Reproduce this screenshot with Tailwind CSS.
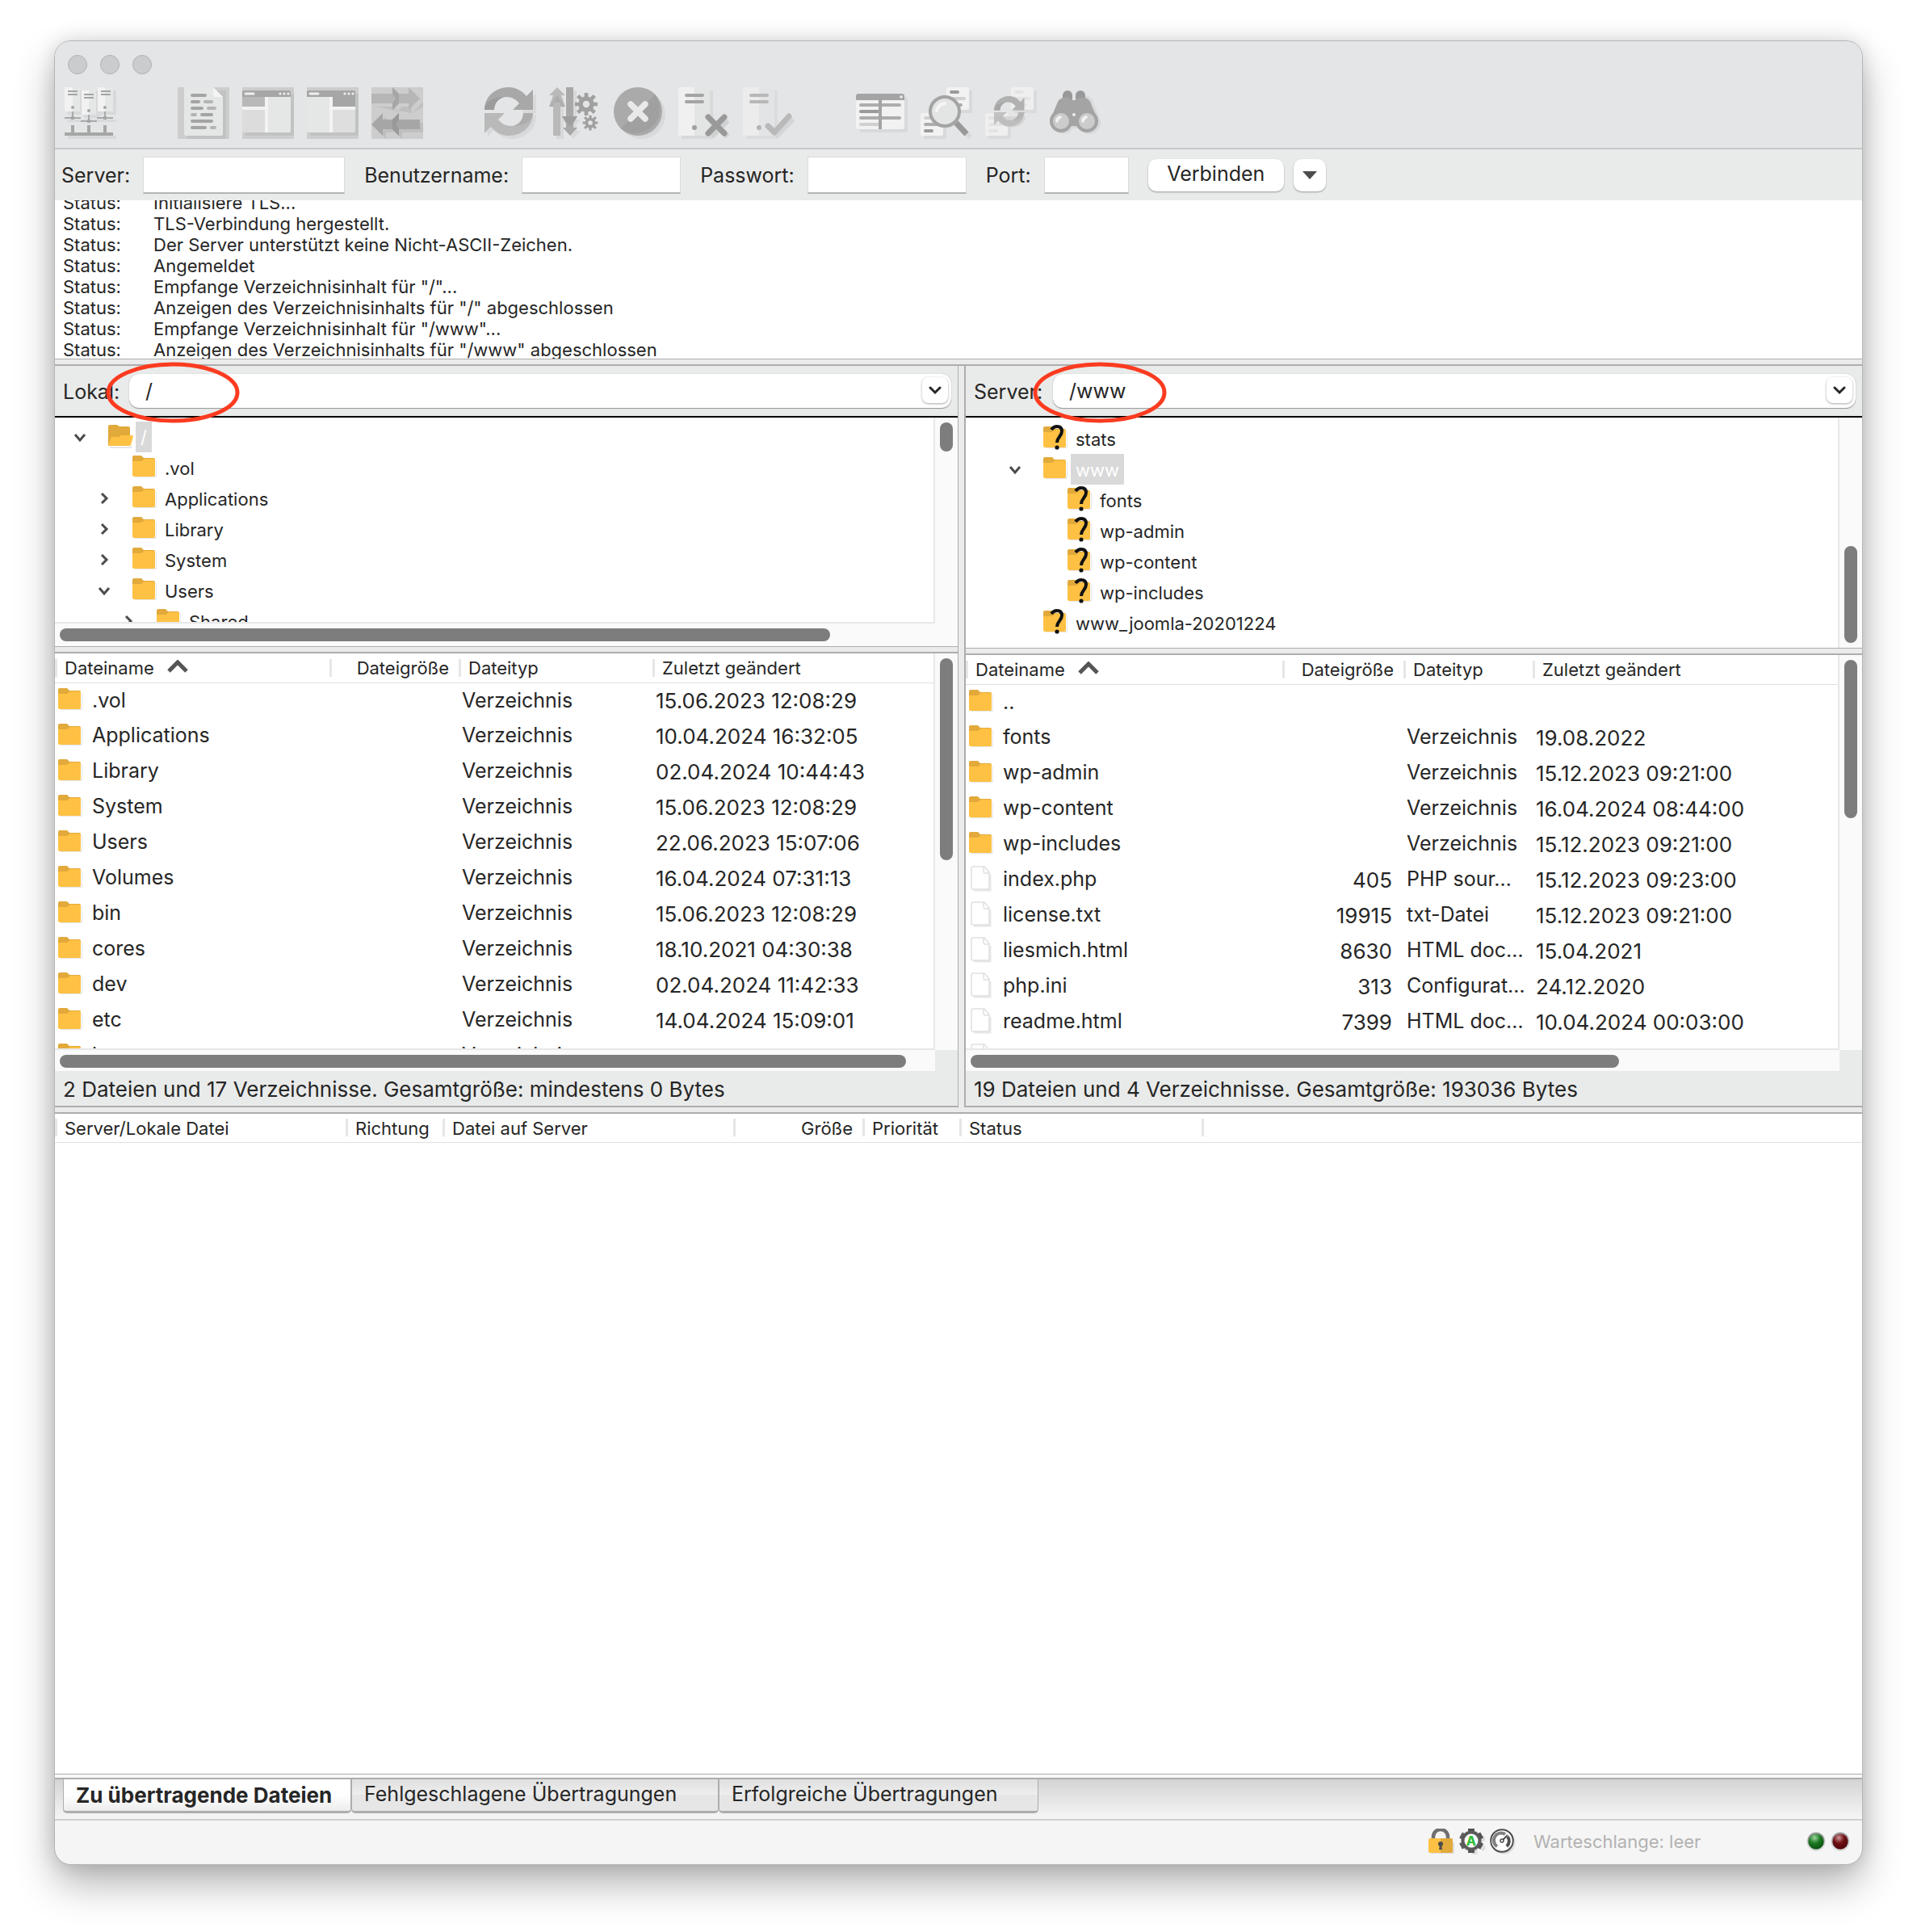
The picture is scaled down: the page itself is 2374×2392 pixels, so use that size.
<!DOCTYPE html>
<html lang="de">
<head>
    <meta charset="UTF-8">
    <meta name="viewport" content="width=device-width, initial-scale=1">
    <title>FileZilla</title>
    <script src="https://cdn.jsdelivr.net/npm/@tailwindcss/browser@4"></script>
</head>
<body class="bg-white font-['Inter','Liberation_Sans',sans-serif] text-[25px] text-[#262626]">

    <!-- Shared icons -->
    <svg class="hidden" aria-hidden="true">
        <symbol id="folder" viewBox="0 0 32 32">
            <path d="M3 29h25a2 2 0 0 0 2-2V8h-1v19H3z" fill="#e6e6e6"/>
            <path d="M0 4a2 2 0 0 1 2-2h9l3 3h12a2 2 0 0 1 2 2v4H0z" fill="#e2a93b"/>
            <path d="M0 9h11l4-3h11a2 2 0 0 1 2 2v18a2 2 0 0 1-2 2H2a2 2 0 0 1-2-2z" fill="#ffc143"/>
        </symbol>
        <symbol id="folder-open" viewBox="0 0 32 32">
            <path d="M2 29h25l3-3-1 5H2z" fill="#e6e6e6"/>
            <path d="M0 4a2 2 0 0 1 2-2h9l3 2h11a2 2 0 0 1 2 2v22H0z" fill="#e2a93b"/>
            <path d="M4 17h9l3-2h14a1 1 0 0 1 1 1l-3 11a2 2 0 0 1-2 1H1a1 1 0 0 1-1-1z" fill="#ffc143"/>
        </symbol>
        <symbol id="folder-unknown" viewBox="0 0 32 32">
            <use href="#folder"/>
            <path d="M10 6c2-3 5-4 7-4 4 0 6 2 6 6 0 6-6 7-6 14" fill="none" stroke="#111" stroke-width="4"/>
            <circle cx="17" cy="28" r="2.6" fill="#111"/>
        </symbol>
        <symbol id="file" viewBox="0 0 32 32">
            <path d="M6 30h20v-19" fill="none" stroke="#e8e8e8" stroke-width="3"/>
            <path d="M5 1h14l6 7v19a2 2 0 0 1-2 2H5a2 2 0 0 1-2-2V3a2 2 0 0 1 2-2z" fill="#fff" stroke="#e0e0e0" stroke-width="1.5"/>
            <path d="M18 1v6l1 2h6" fill="none" stroke="#e0e0e0" stroke-width="1.5"/>
        </symbol>
        <symbol id="chevron-down" viewBox="0 0 16 16"><path d="M2 5l6 7 6-7" fill="none" stroke="#4c4c4c" stroke-width="3"/></symbol>
        <symbol id="chevron-right" viewBox="0 0 16 16"><path d="M5 2l6 6-6 6" fill="none" stroke="#4c4c4c" stroke-width="3"/></symbol>
        <symbol id="sort-up" viewBox="0 0 26 16"><path d="M2 14L13 3l11 11" fill="none" stroke="#555" stroke-width="5"/></symbol>
        <symbol id="arrows-round" viewBox="0 0 64 64">
            <path d="M0 28C0 12 13 0 30 0c9 0 16 4 22 11l8-8v25H35l8-8c-4-5-9-8-16-8-8 0-15 7-15 16z" fill="#a8a8a8"/>
            <path d="M0 28C0 22 6 12 24 12c-7 2-12 8-12 16z" fill="#9c9c9c"/>
            <path d="M60 32c0 16-13 28-30 28-9 0-16-4-22-11l-8 8V32h25l-8 8c4 5 9 8 16 8 8 0 15-7 15-16z" fill="#b9b9b9"/>
            <path d="M60 32c0 6-6 16-24 16 7-2 12-8 12-16z" fill="#adadad"/>
        </symbol>
        <symbol id="gear" viewBox="-16 -16 32 32">
            <circle r="7.5" fill="none" stroke="#a0a0a0" stroke-width="6"/>
            <g stroke="#a0a0a0" stroke-width="5">
                <path d="M0-15v6M0 9v6M-15 0h6M9 0h6M-11-11l4 4M7 7l4 4M-11 11l4-4M7-7l4-4"/>
            </g>
        </symbol>
        <symbol id="server-box" viewBox="0 0 64 64">
            <path d="M4 4h39v60H4z" fill="#d8d9da"/>
            <rect width="39" height="60" rx="2" fill="#e3e4e4"/>
            <path d="M2 0h18v60H2a2 2 0 0 1-2-2V2a2 2 0 0 1 2-2z" fill="#f0f0f0"/>
            <path d="M10 10h20M10 18h20" stroke="#a4a4a4" stroke-width="4" stroke-linecap="round"/>
            <circle cx="20" cy="50" r="3" fill="#a0a0a0"/>
        </symbol>
    </svg>

    <div class="flex h-screen flex-col px-[68px] pt-[51px] pb-[84px]">
    <main class="flex min-h-0 flex-1 flex-col overflow-hidden rounded-[20px] bg-[#f5f5f5] shadow-[0_0_0_1px_#b5b5b5,0_24px_50px_rgba(0,0,0,0.3),0_0_24px_rgba(0,0,0,0.14)]">

        <!-- Title bar and toolbar -->
        <header class="h-[134px] shrink-0 border-b-2 border-[#c6c7c8] bg-[#e4e5e6] pt-[17px]">
            <div class="flex gap-4 px-4">
                <button aria-label="Schließen" class="size-6 rounded-full border border-[#b0b1b2] bg-[#cbcccd]"></button>
                <button aria-label="Minimieren" class="size-6 rounded-full border border-[#b0b1b2] bg-[#cbcccd]"></button>
                <button aria-label="Zoomen" class="size-6 rounded-full border border-[#b0b1b2] bg-[#cbcccd]"></button>
            </div>
            <nav class="mt-4 flex gap-[76px] px-3">
                <button aria-label="Servermanager">
                    <svg class="size-16" viewBox="0 0 64 64">
                        <path d="M4 4h60v30H44v4H24v-4H4zM4 40h60v3H4zM4 60h60v4H4z" fill="#d8d9da"/>
                        <path d="M0 0h19v30H0zM41 0h19v30H41zM21 4h18v30H21z" fill="#e5e6e6"/>
                        <path d="M0 0h10v30H2l-2-2zM41 0h9v30h-9zM21 4h9v30h-9z" fill="#f2f2f2"/>
                        <path d="M4 5h12M4 9h12M24 9h12M24 13h12M45 5h12M45 9h12" stroke="#a4a4a4" stroke-width="2"/>
                        <path d="M10 30v8M30 34v8M50 30v8M0 38h20M20 42h20M40 38h20" stroke="#aaa" stroke-width="2"/>
                        <path d="M10 47v12M30 47v12M50 47v12M0 58h60" fill="none" stroke="#a6a6a6" stroke-width="4"/>
                        <g fill="#a6a6a6"><circle cx="10" cy="25" r="2"/><circle cx="30" cy="29" r="2"/><circle cx="50" cy="25" r="2"/><path d="M8 36h4v4H8zM28 40h4v4h-4zM48 36h4v4h-4z"/></g>
                    </svg>
                </button>
                <div class="flex gap-4">
                    <button aria-label="Nachrichtenprotokoll">
                        <svg class="size-16" viewBox="0 0 64 64">
                            <rect width="64" height="64" rx="1" fill="#cdcdcd"/>
                            <path d="M12 64V4h48v60z" fill="#c1c2c2"/>
                            <path d="M8 0h36l12 12v46a2 2 0 0 1-2 2H10a2 2 0 0 1-2-2z" fill="#e5e6e6"/>
                            <path d="M44 0l12 12H46a2 2 0 0 1-2-2z" fill="#f4f4f4"/>
                            <path d="M18 10h16M18 18h8M18 26h12M30 34h12M18 42h24M18 50h16" stroke="#a4a4a4" stroke-width="4" stroke-linecap="round"/>
                            <path d="M34 18h8M38 26h8M18 34h4M42 50h4" stroke="#b4b4b4" stroke-width="4" stroke-linecap="round"/>
                        </svg>
                    </button>
                    <button aria-label="Lokaler Verzeichnisbaum">
                        <svg class="size-16" viewBox="0 0 64 64">
                            <rect width="64" height="64" rx="1" fill="#cdcdcd"/>
                            <path d="M4 8h60v52H4z" fill="#c1c2c2"/>
                            <path d="M0 12h60v42a2 2 0 0 1-2 2H2a2 2 0 0 1-2-2z" fill="#e5e6e6"/>
                            <path d="M0 28h28v28H0z" fill="#dcdcdc"/>
                            <path d="M0 12V6a2 2 0 0 1 2-2h56a2 2 0 0 1 2 2v6z" fill="#a6a6a6"/>
                            <path d="M0 12h28v12H0z" fill="#b8b8b8"/>
                            <path d="M28 12h4v44h-4V28H0v-4h28z" fill="#f3f3f3"/>
                            <path d="M4 8h10" stroke="#eee" stroke-width="3" stroke-linecap="round"/>
                            <g fill="#eee"><circle cx="47" cy="8" r="1.6"/><circle cx="52" cy="8" r="1.6"/><circle cx="57" cy="8" r="1.6"/></g>
                        </svg>
                    </button>
                    <button aria-label="Server-Verzeichnisbaum">
                        <svg class="size-16" viewBox="0 0 64 64">
                            <rect width="64" height="64" rx="1" fill="#cdcdcd"/>
                            <path d="M4 8h60v52H4z" fill="#c1c2c2"/>
                            <path d="M0 12h60v42a2 2 0 0 1-2 2H2a2 2 0 0 1-2-2z" fill="#dedede"/>
                            <path d="M0 12h28v44H2l-2-2z" fill="#e5e6e6"/>
                            <path d="M0 12V6a2 2 0 0 1 2-2h56a2 2 0 0 1 2 2v18H32V12z" fill="#a6a6a6"/>
                            <path d="M28 12h4v12h28v4H32v28h-4z" fill="#f3f3f3"/>
                            <path d="M4 8h10" stroke="#eee" stroke-width="3" stroke-linecap="round"/>
                            <g fill="#eee"><circle cx="47" cy="8" r="1.6"/><circle cx="52" cy="8" r="1.6"/><circle cx="57" cy="8" r="1.6"/></g>
                        </svg>
                    </button>
                    <button aria-label="Transfer-Warteschlange">
                        <svg class="size-16" viewBox="0 0 64 64">
                            <rect width="64" height="64" rx="1" fill="#cdcdcd"/>
                            <path d="M4 24h26v8l8-8h12v8l14-14v6L50 32zM4 50l14-14v8h8l8-8v8h30v12H38v8l-8-8H18v8z" fill="#bfbfbf"/>
                            <path d="M0 8h26V0l8 8h12V0l14 14-14 14v-8H34l-8 8v-8H0z" fill="#b6b6b6"/>
                            <path d="M26 0l8 8v12l-8 8v-8l4-6-4-6z" fill="#a6a6a6"/>
                            <path d="M60 40H34v-8l-8 8H14v-8L0 46l14 14v-8h12l8 8v-8h26z" fill="#a6a6a6"/>
                            <path d="M34 32l-8 8v12l8 8v-8l-4-6 4-6z" fill="#999"/>
                        </svg>
                    </button>
                </div>
                <div class="flex gap-4">
                    <button aria-label="Aktualisieren">
                        <svg class="size-16" viewBox="0 0 64 64">
                            <path d="M64 8v24H48V20zM64 34c0 18-13 30-30 30-9 0-16-4-22-11l-8 8V54l12-14z" fill="#d8d9da"/>
                            <path d="M17 40l8-8h23c0 9-7 16-15 16-7 0-12-3-16-8z" fill="#e4e5e6"/>
                            <use href="#arrows-round"/>
                        </svg>
                    </button>
                    <button aria-label="Warteschlange verarbeiten">
                        <svg class="size-16" viewBox="0 0 64 64">
                            <path d="M9 14h9v50H9zM25 4h9v36h5l-5 6v8h5l-9 10-9-10h4z" fill="#d8d9da"/>
                            <path d="M10 0l10 10h-5l5 14h-6v36H5V24H0l5-14H0z" fill="#b9b9b9"/>
                            <path d="M10 10l10 14h-6v-5H5v5H0z" fill="#adadad"/>
                            <path d="M21 0h9v36h5l-5 9v5h5l-9 10-9-10h4v-5l-5-9h5z" fill="#a8a8a8"/>
                            <path d="M16 36h19l-9 12z" fill="#9e9e9e"/>
                            <use href="#gear" x="31" y="6" width="30" height="30"/>
                            <use href="#gear" x="41" y="34" width="20" height="20"/>
                        </svg>
                    </button>
                    <button aria-label="Abbrechen">
                        <svg class="size-16" viewBox="0 0 64 64">
                            <circle cx="34" cy="34" r="30" fill="#d8d9da"/>
                            <circle cx="30" cy="30" r="30" fill="#aaa"/>
                            <path d="M51 9A30 30 0 0 1 9 51z" fill="#a0a0a0"/>
                            <path d="M21 21l18 18M39 21L21 39" stroke="#e9e9e9" stroke-width="7.5" stroke-linecap="round"/>
                        </svg>
                    </button>
                    <button aria-label="Trennen">
                        <svg class="size-16" viewBox="0 0 64 64">
                            <use href="#server-box"/>
                            <path d="M41 41l20 20M61 41L41 61" stroke="#d0d1d2" stroke-width="7"/>
                            <path d="M37 37l20 20M57 37L37 57" stroke="#999" stroke-width="7" stroke-linecap="round"/>
                        </svg>
                    </button>
                    <button aria-label="Wiederverbinden">
                        <svg class="size-16" viewBox="0 0 64 64">
                            <use href="#server-box" opacity="0.7"/>
                            <path d="M35 51l8 8 19-20" fill="none" stroke="#d4d5d6" stroke-width="7"/>
                            <path d="M31 48l8 8 18-20" fill="none" stroke="#b9b9b9" stroke-width="7" stroke-linecap="round" stroke-linejoin="round"/>
                        </svg>
                    </button>
                </div>
                <div class="flex gap-4">
                    <button aria-label="Filter">
                        <svg class="size-16" viewBox="0 0 64 64">
                            <rect x="4" y="12" width="60" height="44" rx="3" fill="#d8d9da"/>
                            <rect y="8" width="60" height="44" rx="3" fill="#f2f2f2"/>
                            <path d="M0 16v-5a3 3 0 0 1 3-3h54a3 3 0 0 1 3 3v5z" fill="#a4a4a4"/>
                            <path d="M6 22h48M6 38h48" stroke="#adadad" stroke-width="4" stroke-linecap="round"/>
                            <path d="M6 30h22" stroke="#9a9a9a" stroke-width="4" stroke-linecap="round"/>
                            <path d="M6 46h22" stroke="#d0d0d0" stroke-width="4" stroke-linecap="round"/>
                            <path d="M30 16v36" stroke="#a4a4a4" stroke-width="4"/>
                            <circle cx="56" cy="12" r="1.8" fill="#eee"/>
                        </svg>
                    </button>
                    <button aria-label="Verzeichnisvergleich">
                        <svg class="size-16" viewBox="0 0 64 64">
                            <path d="M36 4h28v28H36zM4 36h28v28H4zM44 48l4-4 16 16-4 4z" fill="#d8d9da"/>
                            <rect x="32" width="28" height="28" rx="2" fill="#f2f2f2"/>
                            <rect y="32" width="28" height="28" rx="2" fill="#f2f2f2"/>
                            <path d="M38 6h8M6 54h8" stroke="#9a9a9a" stroke-width="4" stroke-linecap="round"/>
                            <path d="M38 14h16M6 38h16" stroke="#d0d0d0" stroke-width="4" stroke-linecap="round"/>
                            <path d="M38 22h12M6 46h14" stroke="#adadad" stroke-width="4" stroke-linecap="round"/>
                            <path d="M44 44l13 14" stroke="#999" stroke-width="7"/>
                            <circle cx="30" cy="30" r="18" fill="#e3e5e4" stroke="#a4a4a4" stroke-width="4"/>
                            <path d="M20 29c1-5 4-8 10-9" fill="none" stroke="#f5f5f5" stroke-width="4" stroke-linecap="round"/>
                        </svg>
                    </button>
                    <button aria-label="Synchronisiertes Browsen">
                        <svg class="size-16" viewBox="0 0 64 64">
                            <path d="M36 4h28v28H36zM4 36h28v28H4z" fill="#dadbdc"/>
                            <rect x="32" width="28" height="28" rx="2" fill="#efefef"/>
                            <rect y="32" width="28" height="28" rx="2" fill="#efefef"/>
                            <path d="M38 6h8M38 14h16M38 22h12M6 38h16M6 46h14M6 54h8" stroke="#e2e4e3" stroke-width="4" stroke-linecap="round"/>
                            <path d="M18 36h32c0 14-22 20-32 4z" fill="#d6d6d6"/>
                            <g opacity="0.85"><use href="#arrows-round" x="11" y="11" width="40" height="40"/></g>
                        </svg>
                    </button>
                    <button aria-label="Suchen">
                        <svg class="size-16" viewBox="0 0 64 64">
                            <path d="M46 10l6 4 11 28a14 14 0 0 1-26 9h-8a14 14 0 0 1-24 0z" fill="#d8d9da"/>
                            <path d="M16 16V10a6 6 0 0 1 12 0v6zM32 16V10a6 6 0 0 1 12 0v6z" fill="#999"/>
                            <path d="M0 42L10 18c3-6 13-7 18-2h4c5-5 15-4 18 2l10 24-16 8-12-2h-4l-12 2z" fill="#a4a4a4"/>
                            <circle cx="14" cy="42" r="12" fill="#ccc" stroke="#a4a4a4" stroke-width="4"/>
                            <circle cx="46" cy="42" r="12" fill="#ccc" stroke="#a4a4a4" stroke-width="4"/>
                            <path d="M9 42c0-3 1-4 4-5M41 42c0-3 1-4 4-5" fill="none" stroke="#f2f2f2" stroke-width="3.5" stroke-linecap="round"/>
                            <circle cx="30" cy="34" r="2" fill="#eee"/>
                        </svg>
                    </button>
                </div>
            </nav>
        </header>

        <!-- Quick connect -->
        <form class="flex h-[63px] shrink-0 items-center bg-[#e9ebea] pl-2 [&_label]:pt-[2px]">
            <label for="host">Server:</label>
            <input id="host" type="text" class="ml-4 mr-6 h-[46px] w-[250px] border border-b-2 border-[#dadbda] border-b-[#b4b5b4] bg-white px-2 outline-none">
            <label for="user">Benutzername:</label>
            <input id="user" type="text" class="ml-4 mr-6 h-[46px] w-[197px] border border-b-2 border-[#dadbda] border-b-[#b4b5b4] bg-white px-2 outline-none">
            <label for="pass">Passwort:</label>
            <input id="pass" type="password" class="ml-4 mr-6 h-[46px] w-[197px] border border-b-2 border-[#dadbda] border-b-[#b4b5b4] bg-white px-2 outline-none">
            <label for="port">Port:</label>
            <input id="port" type="text" class="ml-4 mr-6 h-[46px] w-[105px] border border-b-2 border-[#dadbda] border-b-[#b4b5b4] bg-white px-2 outline-none">
            <button type="submit" class="mr-3 h-10 w-[168px] rounded-[10px] bg-white pb-[2px] shadow-[0_1px_2px_rgba(0,0,0,0.35)]">Verbinden</button>
            <button type="button" aria-label="Verlauf" class="flex h-10 w-10 items-center justify-center rounded-[10px] bg-white shadow-[0_1px_2px_rgba(0,0,0,0.35)]">
                <svg class="h-[10px] w-[18px]" viewBox="0 0 18 10"><path d="M0 0h18l-9 10z" fill="#4c4c4c"/></svg>
            </button>
        </form>

        <!-- Message log, scrolled to its end -->
        <section class="flex h-[197px] shrink-0 flex-col justify-end overflow-hidden border-b border-[#adadad] bg-white pl-[10px] text-[22px] leading-[26px]">
            <div class="-mb-[2px]">
                <p class="flex"><span class="w-28">Status:</span>Initialisiere TLS...</p>
                <p class="flex"><span class="w-28">Status:</span>TLS-Verbindung hergestellt.</p>
                <p class="flex"><span class="w-28">Status:</span>Der Server unterstützt keine Nicht-ASCII-Zeichen.</p>
                <p class="flex"><span class="w-28">Status:</span>Angemeldet</p>
                <p class="flex"><span class="w-28">Status:</span>Empfange Verzeichnisinhalt für "/"...</p>
                <p class="flex"><span class="w-28">Status:</span>Anzeigen des Verzeichnisinhalts für "/" abgeschlossen</p>
                <p class="flex"><span class="w-28">Status:</span>Empfange Verzeichnisinhalt für "/www"...</p>
                <p class="flex"><span class="w-28">Status:</span>Anzeigen des Verzeichnisinhalts für "/www" abgeschlossen</p>
            </div>
        </section>
        <div class="h-2 shrink-0 border-b-2 border-[#adadad] bg-[#ebebeb]"></div>

        <div class="flex shrink-0">
            <!-- Local side -->
            <section class="flex w-1/2 min-w-0 flex-col border-r border-[#adadad]">
                <div class="relative flex h-16 items-center border-b-2 border-black bg-[#e9ebea] pr-2 pl-[10px]">
                    <label for="local-path" class="w-[82px] pt-1">Lokal:</label>
                    <div class="relative flex-1">
                        <select id="local-path" class="block h-[42px] w-full appearance-none rounded-[12px] bg-white px-5 pt-[2px] shadow-[0_1px_1px_rgba(0,0,0,0.35),0_0_1px_rgba(0,0,0,0.3)] outline-none">
                            <option>/</option>
                        </select>
                        <span class="pointer-events-none absolute top-1 right-1 flex size-8 items-center justify-center rounded-[8px] bg-white shadow-[0_1px_3px_rgba(0,0,0,0.35)]">
                            <svg class="h-4 w-4" viewBox="0 0 16 16"><path d="M2 5l6 6 6-6" fill="none" stroke="#262626" stroke-width="3" stroke-linecap="round"/></svg>
                        </span>
                    </div>
                    <svg class="absolute -top-[5px] left-[63px] z-10 h-[76px] w-[166px]" viewBox="0 0 166 76"><ellipse cx="83" cy="38" rx="80" ry="35" fill="none" stroke="#fb3b20" stroke-width="5"/></svg>
                </div>
                <div class="flex h-[283px] bg-white text-[22px]">
                    <div class="flex min-w-0 flex-1 flex-col">
                        <ul class="min-h-0 flex-1 overflow-hidden border-r-2 border-b-2 border-[#e8e8e8] pt-[5px]">
                            <li class="flex h-[38px] items-center pl-[23px]"><svg class="mr-[27px] size-4"><use href="#chevron-down"/></svg><svg class="mb-[2px] size-8"><use href="#folder-open"/></svg><span class="ml-[2px] flex h-full items-center bg-[#d9d9d9] px-[6px] text-white">/</span></li>
                            <li class="flex h-[38px] items-center pl-[96px]"><svg class="mb-[2px] size-8"><use href="#folder"/></svg><span class="pl-2 pt-[2px]">.vol</span></li>
                            <li class="flex h-[38px] items-center pl-[53px]"><svg class="mr-[27px] size-4"><use href="#chevron-right"/></svg><svg class="mb-[2px] size-8"><use href="#folder"/></svg><span class="pl-2 pt-[2px]">Applications</span></li>
                            <li class="flex h-[38px] items-center pl-[53px]"><svg class="mr-[27px] size-4"><use href="#chevron-right"/></svg><svg class="mb-[2px] size-8"><use href="#folder"/></svg><span class="pl-2 pt-[2px]">Library</span></li>
                            <li class="flex h-[38px] items-center pl-[53px]"><svg class="mr-[27px] size-4"><use href="#chevron-right"/></svg><svg class="mb-[2px] size-8"><use href="#folder"/></svg><span class="pl-2 pt-[2px]">System</span></li>
                            <li class="flex h-[38px] items-center pl-[53px]"><svg class="mr-[27px] size-4"><use href="#chevron-down"/></svg><svg class="mb-[2px] size-8"><use href="#folder"/></svg><span class="pl-2 pt-[2px]">Users</span></li>
                            <li class="flex h-[38px] items-center pl-[83px]"><svg class="mr-[27px] size-4"><use href="#chevron-right"/></svg><svg class="mb-[2px] size-8"><use href="#folder"/></svg><span class="pl-2 pt-[2px]">Shared</span></li>
                        </ul>
                        <div class="h-7 bg-[#fafafa] px-[6px] pt-[6px]"><div class="h-4 rounded-full bg-[#7d7d7d]" style="width: 88.5%"></div></div>
                    </div>
                    <div class="w-7 bg-[#fafafa] px-[6px] pt-[6px]"><div class="h-9 rounded-full bg-[#7d7d7d]"></div></div>
                </div>
                <div class="h-[9px] border-t border-b-2 border-[#adadad] bg-[#ebebeb]"></div>
                <div class="flex h-[517px] bg-[#e9ebea]">
                    <div class="flex min-w-0 flex-1 flex-col">
                        <div class="min-h-0 flex-1 overflow-hidden border-r-2 border-b-2 border-[#e8e8e8] bg-white">
                            <table class="w-full table-fixed whitespace-nowrap [&_td]:px-1 [&_td:nth-child(2)]:pr-3 [&_td:nth-child(2)]:text-right [&_td:nth-child(4)]:text-[26px] [&_tbody_tr]:h-11 [&_th]:bg-[linear-gradient(#e6e6e6,#e6e6e6)] [&_th]:bg-[length:3px_22px] [&_th]:bg-left [&_th]:bg-no-repeat [&_th]:px-3 [&_th]:leading-[22px] [&_th]:font-normal">
                                <thead class="border-b border-[#e0e0e0] text-left text-[22px]">
                                    <tr class="h-[36px]"><th class="w-[340px]"><span class="flex items-center gap-4">Dateiname <svg class="mb-1 h-4 w-[26px]"><use href="#sort-up"/></svg></span></th><th class="w-[160px] text-right">Dateigröße</th><th class="w-60">Dateityp</th><th>Zuletzt geändert</th></tr>
                                </thead>
                                <tbody>
                                    <tr><td><span class="flex items-center gap-[10px]"><svg class="mb-[2px] size-8"><use href="#folder"/></svg>.vol</span></td><td></td><td>Verzeichnis</td><td>15.06.2023 12:08:29</td></tr>
                                    <tr><td><span class="flex items-center gap-[10px]"><svg class="mb-[2px] size-8"><use href="#folder"/></svg>Applications</span></td><td></td><td>Verzeichnis</td><td>10.04.2024 16:32:05</td></tr>
                                    <tr><td><span class="flex items-center gap-[10px]"><svg class="mb-[2px] size-8"><use href="#folder"/></svg>Library</span></td><td></td><td>Verzeichnis</td><td>02.04.2024 10:44:43</td></tr>
                                    <tr><td><span class="flex items-center gap-[10px]"><svg class="mb-[2px] size-8"><use href="#folder"/></svg>System</span></td><td></td><td>Verzeichnis</td><td>15.06.2023 12:08:29</td></tr>
                                    <tr><td><span class="flex items-center gap-[10px]"><svg class="mb-[2px] size-8"><use href="#folder"/></svg>Users</span></td><td></td><td>Verzeichnis</td><td>22.06.2023 15:07:06</td></tr>
                                    <tr><td><span class="flex items-center gap-[10px]"><svg class="mb-[2px] size-8"><use href="#folder"/></svg>Volumes</span></td><td></td><td>Verzeichnis</td><td>16.04.2024 07:31:13</td></tr>
                                    <tr><td><span class="flex items-center gap-[10px]"><svg class="mb-[2px] size-8"><use href="#folder"/></svg>bin</span></td><td></td><td>Verzeichnis</td><td>15.06.2023 12:08:29</td></tr>
                                    <tr><td><span class="flex items-center gap-[10px]"><svg class="mb-[2px] size-8"><use href="#folder"/></svg>cores</span></td><td></td><td>Verzeichnis</td><td>18.10.2021 04:30:38</td></tr>
                                    <tr><td><span class="flex items-center gap-[10px]"><svg class="mb-[2px] size-8"><use href="#folder"/></svg>dev</span></td><td></td><td>Verzeichnis</td><td>02.04.2024 11:42:33</td></tr>
                                    <tr><td><span class="flex items-center gap-[10px]"><svg class="mb-[2px] size-8"><use href="#folder"/></svg>etc</span></td><td></td><td>Verzeichnis</td><td>14.04.2024 15:09:01</td></tr>
                                    <tr><td><span class="flex items-center gap-[10px]"><svg class="mb-[2px] size-8"><use href="#folder"/></svg>home</span></td><td></td><td>Verzeichnis</td><td>02.04.2024 11:42:53</td></tr>
                                </tbody>
                            </table>
                        </div>
                        <div class="h-[26px] bg-[#fafafa] px-[6px] pt-[6px]"><div class="h-4 rounded-full bg-[#7d7d7d]" style="width: 97.2%"></div></div>
                    </div>
                    <div class="mb-[26px] w-7 bg-[#fafafa] px-[6px] pt-[6px]"><div class="h-[250px] rounded-full bg-[#7d7d7d]"></div></div>
                </div>
                <p class="flex h-[45px] items-center border-b-2 border-[#adadad] bg-[#e9ebea] pt-[2px] pl-[10px] text-[26px]">2 Dateien und 17 Verzeichnisse. Gesamtgröße: mindestens 0 Bytes</p>
            </section>

            <div class="w-[7px] shrink-0 bg-[#ebebeb]"></div>

            <!-- Server side -->
            <section class="flex min-w-0 flex-1 flex-col border-l-2 border-[#adadad]">
                <div class="relative flex h-16 items-center border-b-2 border-black bg-[#e9ebea] pr-2 pl-[10px]">
                    <label for="server-path" class="w-[98px] pt-1">Server:</label>
                    <div class="relative flex-1">
                        <select id="server-path" class="block h-[42px] w-full appearance-none rounded-[12px] bg-white px-5 pt-[2px] shadow-[0_1px_1px_rgba(0,0,0,0.35),0_0_1px_rgba(0,0,0,0.3)] outline-none">
                            <option>/www</option>
                        </select>
                        <span class="pointer-events-none absolute top-1 right-1 flex size-8 items-center justify-center rounded-[8px] bg-white shadow-[0_1px_3px_rgba(0,0,0,0.35)]">
                            <svg class="h-4 w-4" viewBox="0 0 16 16"><path d="M2 5l6 6 6-6" fill="none" stroke="#262626" stroke-width="3" stroke-linecap="round"/></svg>
                        </span>
                    </div>
                    <svg class="absolute -top-[5px] left-[83px] z-10 h-[76px] w-[166px]" viewBox="0 0 166 76"><ellipse cx="83" cy="38" rx="80" ry="35" fill="none" stroke="#fb3b20" stroke-width="5"/></svg>
                </div>
                <div class="flex h-[285px] bg-white text-[22px]">
                    <ul class="min-w-0 flex-1 overflow-hidden border-r-2 border-[#e8e8e8] pt-[7px]">
                        <li class="flex h-[38px] items-center pl-[96px]"><svg class="mb-[2px] size-8"><use href="#folder-unknown"/></svg><span class="pl-2 pt-[2px]">stats</span></li>
                        <li class="flex h-[38px] items-center pl-[53px]"><svg class="mr-[27px] size-4"><use href="#chevron-down"/></svg><svg class="mb-[2px] size-8"><use href="#folder"/></svg><span class="ml-[2px] flex h-full items-center bg-[#d9d9d9] px-[6px] pt-[2px] text-white">www</span></li>
                        <li class="flex h-[38px] items-center pl-[126px]"><svg class="mb-[2px] size-8"><use href="#folder-unknown"/></svg><span class="pl-2 pt-[2px]">fonts</span></li>
                        <li class="flex h-[38px] items-center pl-[126px]"><svg class="mb-[2px] size-8"><use href="#folder-unknown"/></svg><span class="pl-2 pt-[2px]">wp-admin</span></li>
                        <li class="flex h-[38px] items-center pl-[126px]"><svg class="mb-[2px] size-8"><use href="#folder-unknown"/></svg><span class="pl-2 pt-[2px]">wp-content</span></li>
                        <li class="flex h-[38px] items-center pl-[126px]"><svg class="mb-[2px] size-8"><use href="#folder-unknown"/></svg><span class="pl-2 pt-[2px]">wp-includes</span></li>
                        <li class="flex h-[38px] items-center pl-[96px]"><svg class="mb-[2px] size-8"><use href="#folder-unknown"/></svg><span class="pl-2 pt-[2px]">www_joomla-20201224</span></li>
                    </ul>
                    <div class="flex w-7 items-end bg-[#fafafa] px-[6px] pb-[6px]"><div class="h-30 w-full rounded-full bg-[#7d7d7d]"></div></div>
                </div>
                <div class="h-[9px] border-t border-b-2 border-[#adadad] bg-[#ebebeb]"></div>
                <div class="flex h-[515px] bg-[#e9ebea]">
                    <div class="flex min-w-0 flex-1 flex-col">
                        <div class="min-h-0 flex-1 overflow-hidden border-r-2 border-b-2 border-[#e8e8e8] bg-white">
                            <table class="w-full table-fixed whitespace-nowrap [&_td]:px-1 [&_td:nth-child(2)]:pr-[14px] [&_td:nth-child(2)]:text-right [&_td:nth-child(2)]:text-[26px] [&_td:nth-child(4)]:text-[26px] [&_tbody_tr]:h-11 [&_th]:bg-[linear-gradient(#e6e6e6,#e6e6e6)] [&_th]:bg-[length:3px_22px] [&_th]:bg-left [&_th]:bg-no-repeat [&_th]:px-3 [&_th]:leading-[22px] [&_th]:font-normal">
                                <thead class="border-b border-[#e0e0e0] text-left text-[22px]">
                                    <tr class="h-[36px]"><th class="w-[392px]"><span class="flex items-center gap-4">Dateiname <svg class="mb-1 h-4 w-[26px]"><use href="#sort-up"/></svg></span></th><th class="w-[150px] text-right">Dateigröße</th><th class="w-40">Dateityp</th><th>Zuletzt geändert</th></tr>
                                </thead>
                                <tbody>
                                    <tr><td><span class="flex items-center gap-[10px]"><svg class="mb-[2px] size-8"><use href="#folder"/></svg>..</span></td><td></td><td></td><td></td></tr>
                                    <tr><td><span class="flex items-center gap-[10px]"><svg class="mb-[2px] size-8"><use href="#folder"/></svg>fonts</span></td><td></td><td>Verzeichnis</td><td>19.08.2022</td></tr>
                                    <tr><td><span class="flex items-center gap-[10px]"><svg class="mb-[2px] size-8"><use href="#folder"/></svg>wp-admin</span></td><td></td><td>Verzeichnis</td><td>15.12.2023 09:21:00</td></tr>
                                    <tr><td><span class="flex items-center gap-[10px]"><svg class="mb-[2px] size-8"><use href="#folder"/></svg>wp-content</span></td><td></td><td>Verzeichnis</td><td>16.04.2024 08:44:00</td></tr>
                                    <tr><td><span class="flex items-center gap-[10px]"><svg class="mb-[2px] size-8"><use href="#folder"/></svg>wp-includes</span></td><td></td><td>Verzeichnis</td><td>15.12.2023 09:21:00</td></tr>
                                    <tr><td><span class="flex items-center gap-[10px]"><svg class="mb-[2px] size-8"><use href="#file"/></svg>index.php</span></td><td>405</td><td>PHP sour…</td><td>15.12.2023 09:23:00</td></tr>
                                    <tr><td><span class="flex items-center gap-[10px]"><svg class="mb-[2px] size-8"><use href="#file"/></svg>license.txt</span></td><td>19915</td><td>txt-Datei</td><td>15.12.2023 09:21:00</td></tr>
                                    <tr><td><span class="flex items-center gap-[10px]"><svg class="mb-[2px] size-8"><use href="#file"/></svg>liesmich.html</span></td><td>8630</td><td>HTML doc…</td><td>15.04.2021</td></tr>
                                    <tr><td><span class="flex items-center gap-[10px]"><svg class="mb-[2px] size-8"><use href="#file"/></svg>php.ini</span></td><td>313</td><td>Configurat…</td><td>24.12.2020</td></tr>
                                    <tr><td><span class="flex items-center gap-[10px]"><svg class="mb-[2px] size-8"><use href="#file"/></svg>readme.html</span></td><td>7399</td><td>HTML doc…</td><td>10.04.2024 00:03:00</td></tr>
                                    <tr><td><span class="flex items-center gap-[10px]"><svg class="mb-[2px] size-8"><use href="#file"/></svg></span></td><td></td><td></td><td></td></tr>
                                </tbody>
                            </table>
                        </div>
                        <div class="h-[26px] bg-[#fafafa] px-[6px] pt-[6px]"><div class="h-4 rounded-full bg-[#7d7d7d]" style="width: 75%"></div></div>
                    </div>
                    <div class="mb-[26px] w-7 bg-[#fafafa] px-[6px] pt-[6px]"><div class="h-49 rounded-full bg-[#7d7d7d]"></div></div>
                </div>
                <p class="flex h-[45px] items-center border-b-2 border-[#adadad] bg-[#e9ebea] pt-[2px] pl-[10px] text-[26px]">19 Dateien und 4 Verzeichnisse. Gesamtgröße: 193036 Bytes</p>
            </section>
        </div>
        <div class="h-2 shrink-0 border-b-2 border-[#adadad] bg-[#ebebeb]"></div>

        <!-- Transfer queue -->
        <section class="min-h-0 flex-1 bg-white">
            <table class="w-full table-fixed border-b border-[#e0e0e0] text-left text-[22px] whitespace-nowrap">
                <thead>
                    <tr class="h-[35px] [&_th]:bg-[linear-gradient(#e6e6e6,#e6e6e6)] [&_th]:bg-[length:3px_22px] [&_th]:bg-left [&_th]:bg-no-repeat [&_th]:px-3 [&_th]:pt-[2px] [&_th]:leading-[22px] [&_th]:font-normal">
                        <th class="w-[360px]">Server/Lokale Datei</th><th class="w-30">Richtung</th><th class="w-[360px]">Datei auf Server</th><th class="w-40 text-right">Größe</th><th class="w-30">Priorität</th><th class="w-75">Status</th><th></th>
                    </tr>
                </thead>
            </table>
        </section>
        <div class="h-[7px] shrink-0 border-t border-b-2 border-[#adadad] bg-[#f8f8f8]"></div>
        <div class="flex h-[51px] shrink-0 items-start border-b-2 border-[#cfcfcf] bg-gradient-to-b from-[#d4d4d4] to-[#f6f6f6] pl-[10px]">
            <button class="h-[42px] w-[357px] rounded-b-[5px] border border-t-0 border-b-[3px] border-[#adadad] bg-gradient-to-b from-white via-white to-[#ececec] pb-1 pl-[15px] text-left text-[26px] font-bold">Zu übertragende Dateien</button>
            <button class="h-[42px] w-[455px] rounded-b-[5px] border border-t-0 border-b-[3px] border-[#adadad] bg-gradient-to-b from-[#e2e2e2] from-10% via-[#efefef] via-50% to-[#e6e6e6] to-50% pb-1 pl-[15px] text-left">Fehlgeschlagene Übertragungen</button>
            <button class="h-[42px] w-[396px] rounded-b-[5px] border border-t-0 border-b-[3px] border-[#adadad] bg-gradient-to-b from-[#e2e2e2] from-10% via-[#efefef] via-50% to-[#e6e6e6] to-50% pb-1 pl-[15px] text-left">Erfolgreiche Übertragungen</button>
        </div>

        <!-- Status bar -->
        <footer class="flex h-[54px] shrink-0 items-center justify-end pr-[13px] pb-[2px] text-[22px]">
            <svg class="size-8" viewBox="0 0 32 32">
                <path d="M3 17h29v14H3z" fill="#ddd"/>
                <path d="M6 14v-4a9 9 0 0 1 18 0v4" fill="none" stroke="#707070" stroke-width="4.5"/>
                <rect y="12" width="30" height="18" rx="2" fill="#ffc143"/>
                <path d="M15 12h13a2 2 0 0 1 2 2v14a2 2 0 0 1-2 2H15z" fill="#e2a93b"/>
                <circle cx="15" cy="19" r="3" fill="#4c4c4c"/><path d="M14 20h2l1 6h-4z" fill="#4c4c4c"/>
            </svg>
            <svg class="ml-[6px] size-8" viewBox="0 0 32 32">
                <path d="M19 3v29M6 11l26 14M6 25l26-14" stroke="#ddd" stroke-width="7"/>
                <path d="M15 0v30M2 8l26 14M2 22L28 8" stroke="#606060" stroke-width="8"/>
                <path d="M15 0v30M15 15l13 7M15 15l13-7" stroke="#505050" stroke-width="7"/>
                <circle cx="15" cy="15" r="10.5" fill="#fff" stroke="#5a5a5a" stroke-width="4"/>
                <text x="15" y="21" text-anchor="middle" font-size="16" font-weight="800" fill="#2fbe3a">A</text>
            </svg>
            <svg class="ml-[6px] size-8" viewBox="0 0 32 32">
                <circle cx="17" cy="17" r="14.5" fill="#ddd"/>
                <circle cx="15" cy="15" r="13.8" fill="#fff" stroke="#4c4c4c" stroke-width="2"/>
                <path d="M9 22A9 9 0 0 1 19 7" fill="none" stroke="#808080" stroke-width="4"/>
                <path d="M22 10a9 9 0 0 1-1 12" fill="none" stroke="#505050" stroke-width="4"/>
                <path d="M15 15l7-7" stroke="#4c4c4c" stroke-width="2"/><circle cx="15" cy="15" r="2" fill="#fff" stroke="#4c4c4c" stroke-width="1.5"/>
            </svg>
            <span class="ml-[22px] w-[336px] text-[#b2b2b2]">Warteschlange: leer</span>
            <svg class="size-7" viewBox="0 0 28 28">
                <defs>
                    <radialGradient id="led-on" cx="0.4" cy="0.25" r="0.8"><stop offset="0" stop-color="#9fd6a0"/><stop offset="0.45" stop-color="#1f7a24"/><stop offset="1" stop-color="#044d0a"/></radialGradient>
                    <radialGradient id="led-off" cx="0.4" cy="0.25" r="0.8"><stop offset="0" stop-color="#cf9a9a"/><stop offset="0.45" stop-color="#701014"/><stop offset="1" stop-color="#4a0205"/></radialGradient>
                </defs>
                <circle cx="14" cy="14" r="11.5" fill="#d4d4d4"/><circle cx="14" cy="13" r="10.5" fill="#999"/><circle cx="14" cy="14" r="9.5" fill="url(#led-on)"/>
            </svg>
            <svg class="ml-[2px] size-7" viewBox="0 0 28 28">
                <circle cx="14" cy="14" r="11.5" fill="#d4d4d4"/><circle cx="14" cy="13" r="10.5" fill="#999"/><circle cx="14" cy="14" r="9.5" fill="url(#led-off)"/>
            </svg>
        </footer>
    </main>
    </div>
</body>
</html>
